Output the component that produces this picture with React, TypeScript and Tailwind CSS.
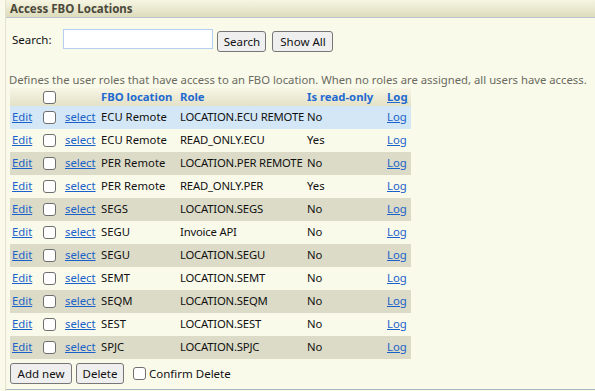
import React from "react";

const rows: [string, string, string, string][] = [
  ["ECU Remote", "LOCATION.ECU REMOTE", "No", "blue"],
  ["ECU Remote", "READ_ONLY.ECU", "Yes", "cream"],
  ["PER Remote", "LOCATION.PER REMOTE", "No", "beige"],
  ["PER Remote", "READ_ONLY.PER", "Yes", "cream"],
  ["SEGS", "LOCATION.SEGS", "No", "beige"],
  ["SEGU", "Invoice API", "No", "cream"],
  ["SEGU", "LOCATION.SEGU", "No", "beige"],
  ["SEMT", "LOCATION.SEMT", "No", "cream"],
  ["SEQM", "LOCATION.SEQM", "No", "beige"],
  ["SEST", "LOCATION.SEST", "No", "cream"],
  ["SPJC", "LOCATION.SPJC", "No", "beige"],
];

function Box() {
  return (
    <span className="inline-block w-[13px] h-[13px] border border-[#6f6f6f] rounded-[3px] bg-white align-middle" />
  );
}

function Btn({ children, w }: { children: React.ReactNode; w: string }) {
  return (
    <span
      className={
        "inline-flex items-center justify-center h-[21px] border border-[#767676] rounded-[3px] bg-[#efefef] text-[#111] text-[11.5px] " +
        w
      }
    >
      {children}
    </span>
  );
}

export default function App() {
  return (
    <div
      className="w-[595px] h-[391px] bg-[#fafaeb] flex overflow-hidden"
      style={{ fontFamily: '"Noto Sans", "Open Sans", sans-serif' }}
    >
      <div className="w-[6px] shrink-0 bg-[#fafaeb] border-r border-[#e4e3cc]" />
      <div className="flex-1 min-w-0 flex flex-col border-b border-[#a9b6c4] h-[390px]">
        <div className="h-[18px] shrink-0 bg-gradient-to-b from-[#f6f5e2] to-[#dedcbd] border-b border-[#b9c4cc] flex items-center pl-[4px]">
          <span className="text-[11.5px] font-bold text-[#4a493a] leading-none">Access FBO Locations</span>
        </div>
        <div className="flex items-start pt-[11px] pl-[6px]">
          <span className="text-[11.5px] text-[#111] mt-[3px] leading-[16px]">Search:</span>
          <span className="ml-[12px] w-[150px] h-[20px] border border-[#b5cfee] bg-white" />
          <span className="flex ml-[4px] mt-[2px]"><Btn w="w-[49px]">Search</Btn></span>
          <span className="flex ml-[6px] mt-[2px]"><Btn w="w-[61px]">Show All</Btn></span>
        </div>
        <div className="mt-[20px] pl-[3px] text-[11.3px] text-[#6a6a60] leading-[16px] whitespace-nowrap">
          Defines the user roles that have access to an FBO location. When no roles are assigned, all users have access.
        </div>
        <table className="ml-[4px] border-collapse text-[11.3px] w-[401px] table-fixed">
          <colgroup>
            <col className="w-[30px]" />
            <col className="w-[23px]" />
            <col className="w-[36px]" />
            <col className="w-[79px]" />
            <col className="w-[127px]" />
            <col className="w-[80px]" />
            <col className="w-[26px]" />
          </colgroup>
          <thead>
            <tr className="h-[18px] bg-gradient-to-b from-[#f7f6e6] to-[#e3e1c6] text-[#1f6ad0] font-bold">
              <th />
              <th className="text-left pl-[3px] leading-none"><Box /></th>
              <th />
              <th className="text-left pl-[2px] pt-[1px] whitespace-nowrap">FBO location</th>
              <th className="text-left pl-[2px] pt-[1px]">Role</th>
              <th className="text-left pl-[2px] pt-[1px] whitespace-nowrap">Is read-only</th>
              <th className="text-left pl-[2px] pt-[1px] underline">Log</th>
            </tr>
          </thead>
          <tbody>
            {rows.map((r, i) => (
              <tr
                key={i}
                className={
                  "h-[23px] " +
                  (r[3] === "blue" ? "bg-[#d4e7f6]" : r[3] === "beige" ? "bg-[#dcdbc7]" : "bg-[#fafaeb]")
                }
              >
                <td className="pl-[2px] text-[#1a62c9] underline">Edit</td>
                <td className="pl-[3px] leading-none"><Box /></td>
                <td className="pl-[2px] text-[#1a62c9] underline">select</td>
                <td className="pl-[2px] text-[#111] whitespace-nowrap">{r[0]}</td>
                <td className="pl-[2px] text-[#111] whitespace-nowrap tracking-[-0.2px]">{r[1]}</td>
                <td className="pl-[2px] text-[#111]">{r[2]}</td>
                <td className="pl-[2px] text-[#1a62c9] underline">Log</td>
              </tr>
            ))}
          </tbody>
        </table>
        <div className="flex items-center mt-[4px] pl-[4px] text-[11.5px] text-[#111]">
          <Btn w="w-[62px]">Add new</Btn>
          <span className="flex ml-[4px]"><Btn w="w-[48px]">Delete</Btn></span>
          <span className="ml-[9px] mr-[3px] flex"><Box /></span>
          <span>Confirm Delete</span>
        </div>
      </div>
    </div>
  );
}
